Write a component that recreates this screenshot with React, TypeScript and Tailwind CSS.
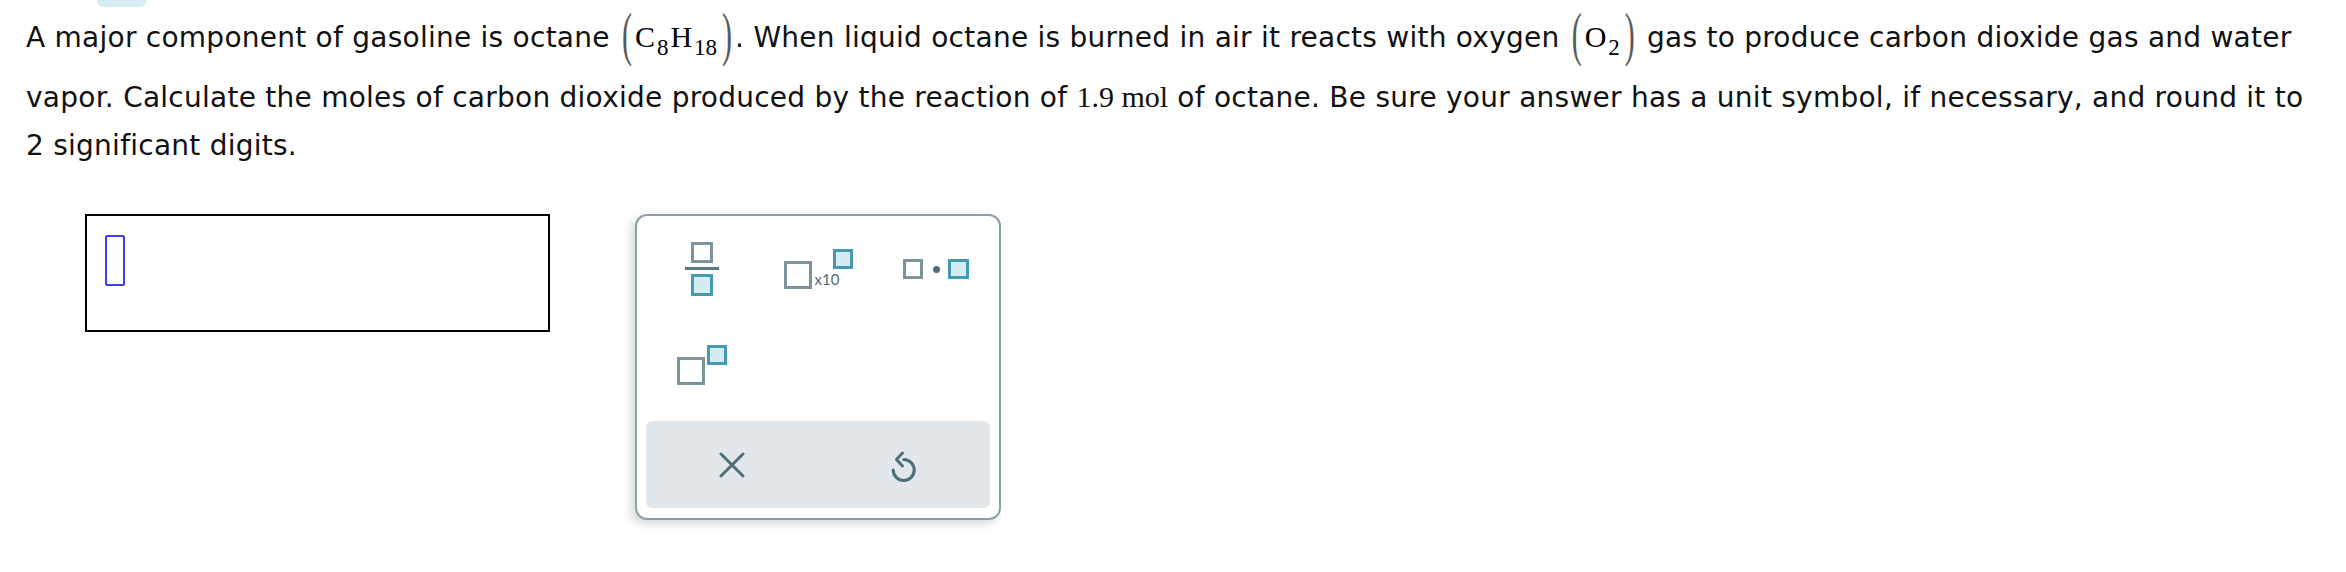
import React from 'react';

const serif = "font-['Liberation_Serif','Times_New_Roman',serif]";

// stretched bracket like the math renderer draws
const Paren = ({ ch }: { ch: string }) => (
  <span className="inline-block mx-[3px] origin-center scale-y-[1.95] -translate-y-[3px] text-[#5a5a5a]">{ch}</span>
);

const Formula = ({ children }: { children: React.ReactNode }) => (
  <span className={`${serif} inline-block align-baseline pb-[12px] text-[30px] leading-[48px] tracking-normal text-black`}>
    <Paren ch="(" />
    {children}
    <Paren ch=")" />
  </span>
);

const Sub = ({ children }: { children: React.ReactNode }) => (
  <sub className="text-[23px] -bottom-[8px] ml-[2px] mr-[2px]">{children}</sub>
);

const GrayBox = ({ size = 'w-[21px] h-[21px]' }: { size?: string }) => (
  <div className={`${size} border-[3px] border-[#7d939c] bg-white`} />
);

const BlueBox = ({ size = 'w-[21px] h-[21px]' }: { size?: string }) => (
  <div className={`${size} border-[3px] border-[#4699b2] bg-[#d4edf3]`} />
);

const App: React.FC = () => {
  return (
    <div className="w-[2346px] h-[572px] bg-white font-['DejaVu_Sans','Verdana',sans-serif] text-[#111]">
      {/* tab peeking at the top */}
      <div className="ml-[97px] w-[50px] h-[7px] rounded-b-[10px] bg-[#d5edf3]" />

      <p className="ml-[26px] w-[2290px] mt-[6px] text-[28px] tracking-[0.25px] leading-[48px]">
        A major component of gasoline is octane{' '}
        <Formula>
          C<Sub>8</Sub>H<Sub>18</Sub>
        </Formula>
        . When liquid octane is burned in air it reacts with oxygen{' '}
        <Formula>
          O<Sub>2</Sub>
        </Formula>{' '}
        gas to produce carbon dioxide gas and water vapor. Calculate the moles of carbon dioxide produced by the
        reaction of <span className={`${serif} text-[30px] tracking-normal`}>1.9 mol</span> of octane. Be sure your
        answer has a unit symbol, if necessary, and round it to 2 significant digits.
      </p>

      <div className="flex items-start gap-[85px] ml-[85px] mt-[44px]">
        {/* answer box */}
        <div className="w-[465px] h-[118px] border-2 border-black pt-[19px] pl-[18px]">
          <div className="w-[20px] h-[51px] border-2 border-[#3d3df5] rounded-[2px]" />
        </div>

        {/* palette */}
        <div className="w-[366px] h-[306px] border-2 border-[#8aa0a8] rounded-[12px] bg-white shadow-[-4px_4px_10px_rgba(0,0,0,0.15)] pt-[5px]">
          <div className="grid grid-cols-[117px_117px_117px] grid-rows-[96px_96px] ml-[6px]">
            {/* fraction */}
            <div className="flex items-center justify-center">
              <div className="flex flex-col items-center">
                <GrayBox size="w-[22px] h-[21px]" />
                <div className="w-[34px] h-[3px] bg-[#587882] mt-[4px]" />
                <div className="mt-[4px]">
                  <BlueBox size="w-[22px] h-[22px]" />
                </div>
              </div>
            </div>

            {/* scientific notation */}
            <div className="flex items-center justify-center">
              <div className="flex h-[40px]">
                <div className="self-end">
                  <GrayBox size="w-[28px] h-[28px]" />
                </div>
                <span className="self-end mb-[1px] ml-[3px] text-[15px] leading-[18px] text-[#4e6e78] font-['Lato','Open_Sans',sans-serif]">
                  x10
                </span>
                <div className="self-start -ml-[6px]">
                  <BlueBox size="w-[20px] h-[20px]" />
                </div>
              </div>
            </div>

            {/* multiplication dot */}
            <div className="flex items-center justify-center">
              <div className="flex items-center">
                <GrayBox size="w-[20px] h-[20px]" />
                <div className="w-[7px] h-[7px] rounded-full bg-[#4e6e78] ml-[10px] mr-[8px]" />
                <BlueBox size="w-[21px] h-[20px]" />
              </div>
            </div>

            {/* superscript */}
            <div className="flex items-center justify-center">
              <div className="flex h-[40px]">
                <div className="self-end">
                  <GrayBox size="w-[28px] h-[28px]" />
                </div>
                <div className="self-start ml-[2px]">
                  <BlueBox size="w-[20px] h-[20px]" />
                </div>
              </div>
            </div>
          </div>

          <div className="mx-[9px] mt-[8px] h-[87px] rounded-[6px] bg-[#e1e7ea] grid grid-cols-2">
            <button className="flex items-center justify-center">
              <svg width="26" height="26" viewBox="0 0 26 26" fill="none" stroke="#4e6e78" strokeWidth="3" strokeLinecap="round">
                <path d="M2 2 L24 24 M24 2 L2 24" />
              </svg>
            </button>
            <button className="flex items-center justify-center">
              <svg width="28" height="34" viewBox="0 0 28 34" fill="none" stroke="#4e6e78" strokeWidth="3" strokeLinecap="round" strokeLinejoin="round" className="mt-[2px]">
                <path d="M13.7 10.5 A10.5 10.5 0 1 1 3.2 21" />
                <path d="M12.5 4 L6.5 10.5 L12.5 17" />
              </svg>
            </button>
          </div>
        </div>
      </div>
    </div>
  );
};

export default App;
